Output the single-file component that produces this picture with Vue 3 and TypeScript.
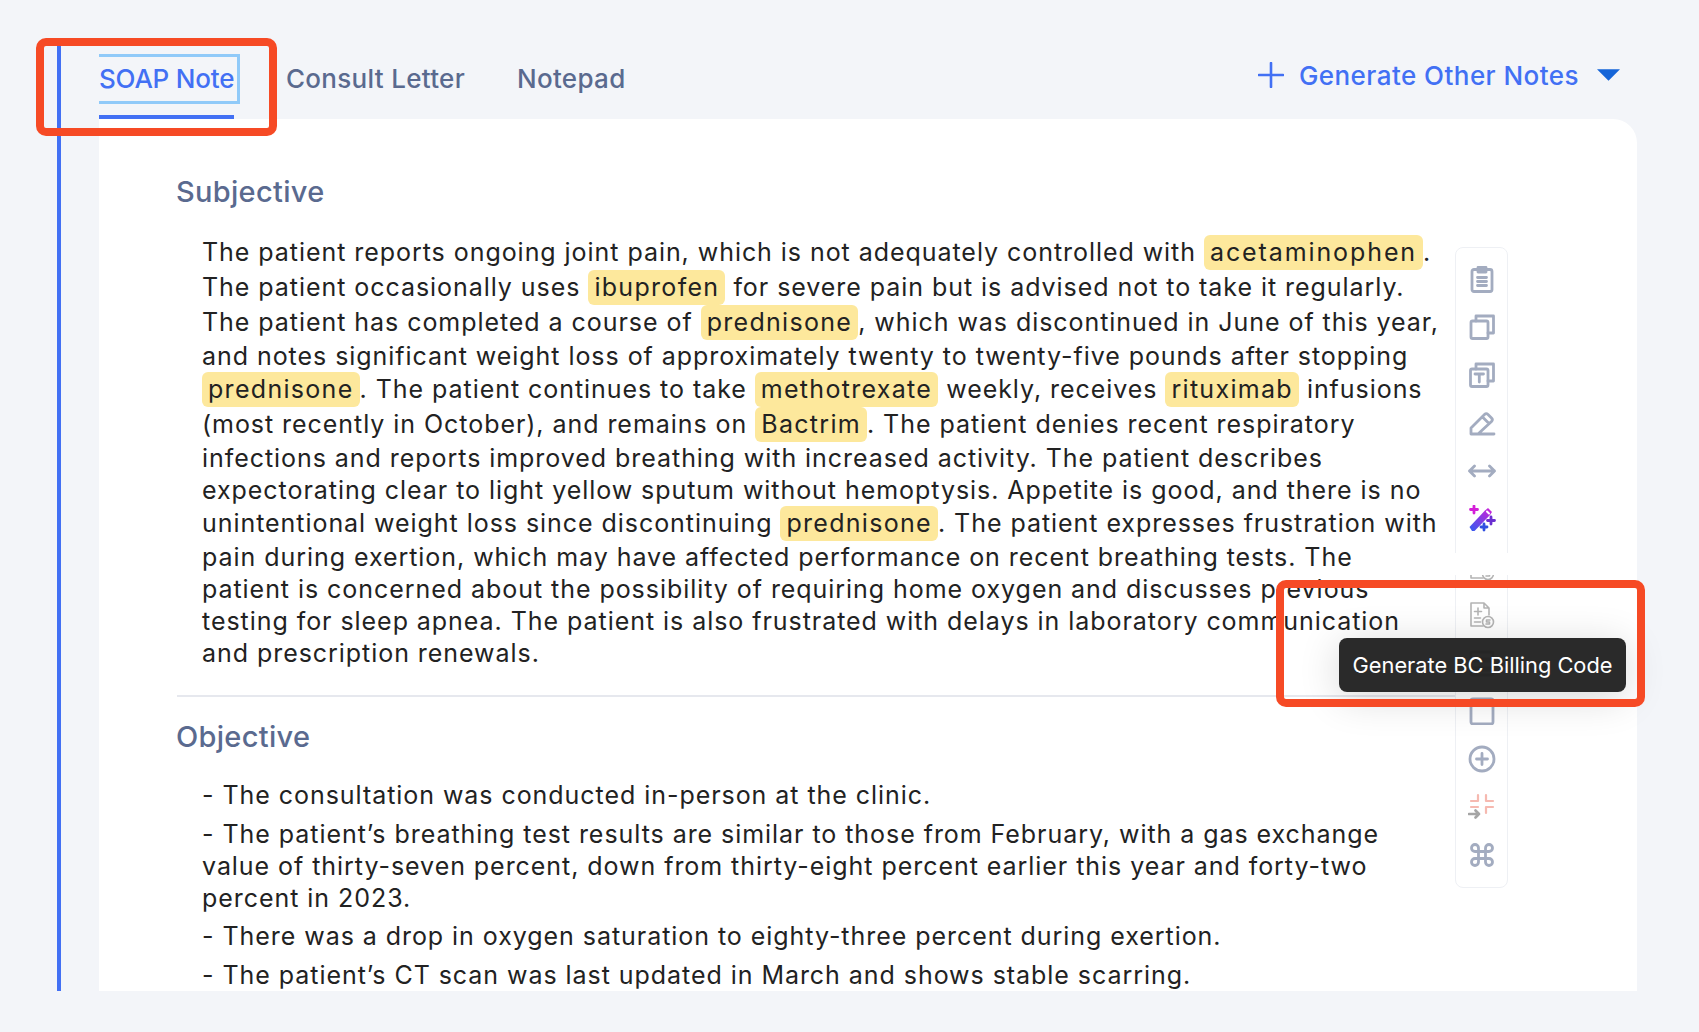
<template>
  <div class="page">
    <main class="panel">
      <header class="tabs-row">
        <nav class="tabs">
          <a class="tab active"><span class="tab-focus">SOAP Note</span></a>
          <a class="tab">Consult Letter</a>
          <a class="tab">Notepad</a>
        </nav>
        <button class="generate">
          <svg class="plus" viewBox="0 0 26 26"><path d="M13 1v24M1 13h24" /></svg>
          <span>Generate Other Notes</span>
          <svg class="caret" viewBox="0 0 24 12"><path d="M0 0h24L12 12z" /></svg>
        </button>
      </header>

      <section class="card">
        <div class="note">
          <h2>Subjective</h2>
          <p class="body">
            The patient reports ongoing joint pain, which is not adequately controlled with <mark class="long">acetaminophen</mark>.<br />
            The patient occasionally uses <mark>ibuprofen</mark> for severe pain but is advised not to take it regularly.<br />
            The patient has completed a course of <mark>prednisone</mark>, which was discontinued in June of this year,<br />
            and notes significant weight loss of approximately twenty to twenty-five pounds after stopping<br />
            <mark>prednisone</mark>. The patient continues to take <mark>methotrexate</mark> weekly, receives <mark>rituximab</mark> infusions<br />
            (most recently in October), and remains on <mark>Bactrim</mark>. The patient denies recent respiratory<br />
            infections and reports improved breathing with increased activity. The patient describes<br />
            expectorating clear to light yellow sputum without hemoptysis. Appetite is good, and there is no<br />
            unintentional weight loss since discontinuing <mark>prednisone</mark>. The patient expresses frustration with<br />
            pain during exertion, which may have affected performance on recent breathing tests. The<br />
            patient is concerned about the possibility of requiring home oxygen and discusses previous<br />
            testing for sleep apnea. The patient is also frustrated with delays in laboratory communication<br />
            and prescription renewals.
          </p>
          <hr />
          <h2 class="second">Objective</h2>
          <div class="body list">
            <p>- The consultation was conducted in-person at the clinic.</p>
            <p>- The patient’s breathing test results are similar to those from February, with a gas exchange<br />value of thirty-seven percent, down from thirty-eight percent earlier this year and forty-two<br />percent in 2023.</p>
            <p>- There was a drop in oxygen saturation to eighty-three percent during exertion.</p>
            <p>- The patient’s CT scan was last updated in March and shows stable scarring.</p>
          </div>
        </div>

        <aside class="toolbar">
          <svg viewBox="0 0 28 28"><rect x="4" y="4.500" width="20" height="22" rx="2" /><path d="M10 2.500h8v4.500h-8zM9.500 12.500h9M9.500 16.500h9M9.500 20.500h9" /></svg>
          <svg viewBox="0 0 28 28"><rect x="3" y="8" width="17" height="17.500" rx="1.500" /><path d="M8 8V3h17.500v17H20" /></svg>
          <svg viewBox="0 0 28 28"><rect x="2.500" y="8" width="17.500" height="17.500" rx="1.500" /><path d="M8 8V3h17.500v17H20M7 13h8.500M11.300 13v8" /></svg>
          <svg viewBox="0 0 28 28"><path d="M3 25v-6L16.500 5.500a2.500 2.500 0 0 1 3.500 0l3.500 3.500a2.500 2.500 0 0 1 0 3.500L10 25zM3 25h23M14.500 8l6.500 6.500" /></svg>
          <svg viewBox="0 0 28 28"><path d="M1.500 14h25M6.500 9l-5 5 5 5M21.500 9l5 5-5 5" /></svg>
          <svg class="wand" viewBox="0 0 28 28">
            <defs>
              <linearGradient id="wandFill" x1="1" y1="0" x2="0" y2="1">
                <stop offset="0" stop-color="#d41fd8" />
                <stop offset="1" stop-color="#2f5cf0" />
              </linearGradient>
            </defs>
            <path d="M1.500 22L17 5.500 20 3l4 4-2 3L6.500 26 4 26z" fill="url(#wandFill)" stroke="none" />
            <path d="M19 6.500l2 2" stroke="#fff" stroke-width="2" />
            <path d="M6 1v7M2.500 4.500h7" stroke="#d41fd8" />
            <path d="M23 12v7M19.500 15.500h7" stroke="#6a2fd0" />
            <path d="M16 19v6M13 22h6" stroke="#2f4fe0" />
          </svg>
          <svg class="bill" viewBox="0 0 28 28"><path d="M15 25H3V2h13l5 5v7M16 2v5h5M10 7v7M6.500 10.500h7M6.500 17h6M6.500 21h6" /><circle cx="20" cy="21" r="5.500" /><path d="M22 19h-3.500v2h3v2H18" /></svg>
          <svg class="bill" viewBox="0 0 28 28"><path d="M15 25H3V2h13l5 5v7M16 2v5h5M10 7v7M6.500 10.500h7M6.500 17h6M6.500 21h6" /><circle cx="20" cy="21" r="5.500" /><path d="M22 19h-3.500v2h3v2H18" /></svg>
          <svg class="stack" viewBox="0 0 28 28"><rect x="3" y="3" width="22" height="7" rx="1" /><rect x="3" y="12" width="22" height="7" rx="1" /><rect x="3" y="21" width="22" height="5" rx="1" /></svg>
          <svg viewBox="0 0 28 28"><rect x="3" y="2" width="22" height="25" rx="2" /></svg>
          <svg viewBox="0 0 28 28"><circle cx="14" cy="14" r="12" /><path d="M14 8.500v11M8.500 14h11" /></svg>
          <svg class="compress" viewBox="0 0 28 28"><path d="M10 2v6H3M18 2v6h7M3 14h7M25 14h-7v6" /><path class="arrow" d="M1 21h10M7.500 17.500L11 21l-3.500 3.500" /></svg>
          <svg viewBox="0 0 24 24" class="cmd"><path d="M15 6v12a3 3 0 1 0 3-3H6a3 3 0 1 0 3 3V6a3 3 0 1 0-3 3h12a3 3 0 1 0-3-3" /></svg>
        </aside>
      </section>
    </main>

    <div class="seam" />
    <div class="tooltip">Generate BC Billing Code</div>
    <div class="callout callout-tabs" />
    <div class="callout callout-tip" />
  </div>
</template>

<script setup lang="ts">
// static screen, nothing reactive
</script>

<style>
html, body { margin: 0; background: #f3f5f9; }
</style>

<style scoped>
.page {
  position: relative;
  width: 1699px;
  height: 1032px;
  overflow: hidden;
  background: #f3f5f9;
  font-family: Inter, "Liberation Sans", sans-serif;
  color: #222;
}
.panel {
  position: absolute;
  left: 57px;
  top: 44px;
  width: 1580px;
  height: 947px;
  border-left: 4px solid #4270f4;
  padding-left: 38px;
  box-sizing: border-box;
  display: flex;
  flex-direction: column;
}
.tabs-row {
  height: 75px;
  flex: none;
  display: flex;
  justify-content: space-between;
  align-items: flex-start;
}
.tabs { display: flex; gap: 52px; height: 75px; }
.tab {
  font-size: 26px;
  line-height: 36px;
  font-weight: 500;
  color: #5a6a8f;
  padding-top: 17px;
  letter-spacing: .3px;
}
.tab.active {
  color: #4270f4;
  position: relative;
  width: 135px;
  white-space: nowrap;
  box-sizing: border-box;
  border-bottom: 4px solid #4270f4;
  height: 75px;
  letter-spacing: -.2px;
}
.tab-focus { position: relative; z-index: 1; }
.tab.active::after {
  content: "";
  position: absolute;
  left: 0;
  top: 10px;
  width: 141px;
  height: 50px;
  box-sizing: border-box;
  border: 3px solid #90caf9;
  border-left: 0;
}
.generate {
  display: flex;
  align-items: center;
  background: none;
  border: 0;
  padding: 0;
  margin: 13px 17px 0 0;
  height: 36px;
  font: 500 26px Inter, sans-serif;
  letter-spacing: .45px;
  color: #4270f4;
}
.plus { width: 26px; height: 26px; margin-right: 15px; fill: none; stroke: #4270f4; stroke-width: 2.600; stroke-linecap: round; }
.caret { width: 23px; height: 12px; margin-left: 18px; fill: #1565d8; }

.card {
  flex: 1;
  background: #fff;
  border-radius: 0 24px 0 0;
  display: flex;
  overflow: hidden;
  padding-left: 78px;
}
.note { width: 1278px; flex: none; }
h2 {
  margin: 53px 0 0 -1px;
  font-size: 29px;
  line-height: 40px;
  font-weight: 500;
  letter-spacing: .3px;
  color: #5a6a8f;
}
.body {
  margin: 23px 0 0;
  padding-left: 25px;
  font-size: 25px;
  letter-spacing: .95px;
  line-height: 32px;
  white-space: nowrap;
}
mark {
  display: inline-block;
  height: 35px;
  line-height: 35px;
  padding: 0 6px;
  border-radius: 6px;
  background: #fde89c;
  color: inherit;
  letter-spacing: 1.300px;
}
mark.long { letter-spacing: 1.900px; }
hr {
  margin: 26px 0 0;
  border: 0;
  height: 2px;
  background: #e6e8ee;
}
h2.second { margin-top: 20px; }
.list { margin-top: 22px; }
.list p { margin: 0 0 6.500px; }
.toolbar {
  width: 53px;
  height: 641px;
  margin-top: 128px;
  flex: none;
  box-sizing: border-box;
  border: 1px solid #eef0f4;
  border-radius: 8px;
  display: flex;
  flex-direction: column;
  align-items: center;
  padding-top: 17px;
  gap: 20px;
}
.toolbar svg {
  width: 28px;
  height: 28px;
  flex: none;
  fill: none;
  stroke: #a3acc0;
  stroke-width: 2.800;
  stroke-linejoin: round;
  stroke-linecap: round;
}
.toolbar .cmd { stroke-width: 2.400; }
.toolbar .bill { stroke: #b4b4b4; stroke-width: 1.600; }
.toolbar .stack { stroke: #555; }
.toolbar .compress { stroke: #f6b9b0; stroke-width: 2.200; }
.toolbar .compress .arrow { stroke: #a5a5a5; stroke-width: 2.600; }
.seam {
  position: absolute;
  left: 1440px;
  top: 553px;
  width: 90px;
  height: 22px;
  background: #fff;
}
.tooltip {
  position: absolute;
  left: 1339px;
  top: 638px;
  width: 287px;
  height: 54px;
  box-sizing: border-box;
  border-radius: 8px;
  background: rgba(38, 38, 38, .98);
  color: #fff;
  font-size: 21.800px;
  line-height: 54px;
  text-align: center;
  box-shadow: 0 6px 40px rgba(0, 0, 0, .16);
}
.callout {
  position: absolute;
  box-sizing: border-box;
  border: 8px solid #f64a25;
  border-radius: 10px;
}
.callout-tabs { left: 36px; top: 38px; width: 241px; height: 98px; }
.callout-tip { left: 1276px; top: 580px; width: 369px; height: 127px; }
</style>
